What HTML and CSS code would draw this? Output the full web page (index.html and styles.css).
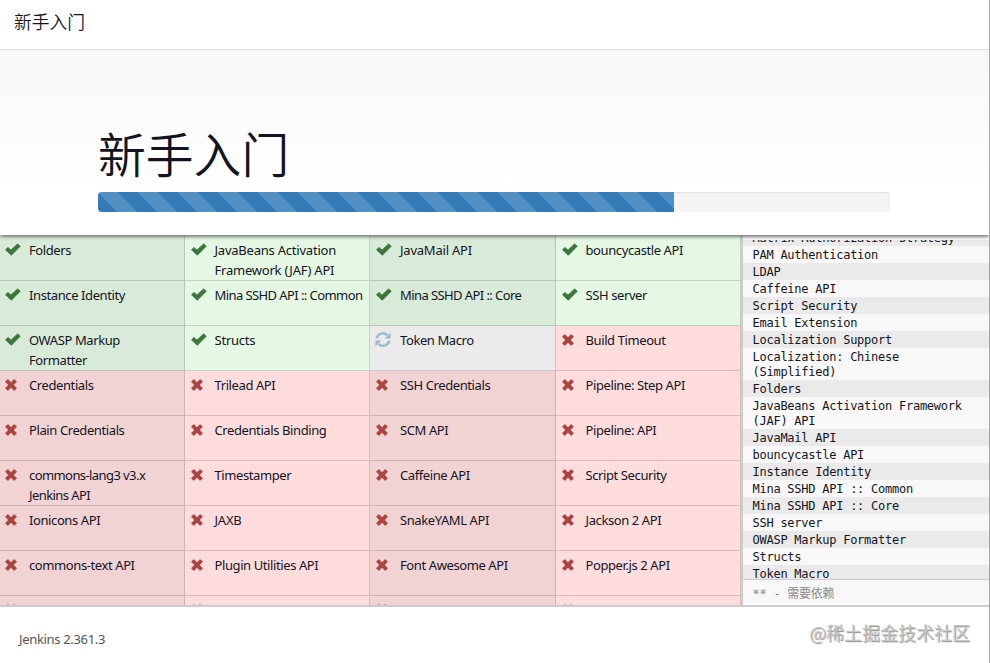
FILE: index.html
```html
<!DOCTYPE html>
<html lang="zh-CN">
<head>
    <meta charset="UTF-8">
    <title>新手入门 [Jenkins]</title>
    <link rel="stylesheet" href="styles.css">
</head>
<body>
    <svg class="sprite">
        <symbol id="ok" viewBox="0 0 16 13"><path d="M.6 6.8 3 4.5 6 7.2 12.5 1 15.2 3.2 6.3 12.2Z" stroke-width="1" stroke-linejoin="round"/></symbol>
        <symbol id="remove" viewBox="0 0 12 12"><path d="M2.8.6 6 3.7 9.2.6 11.4 2.8 8.3 6 11.4 9.2 9.2 11.4 6 8.3 2.8 11.4.6 9.2 3.7 6 .6 2.8Z" stroke-width="1" stroke-linejoin="round"/></symbol>
        <symbol id="refresh" viewBox="0 0 16 15"><path d="M1.7 6.2A6.3 6 0 0 1 12.4 3.2M14.3 8.8A6.3 6 0 0 1 3.6 11.8" fill="none" stroke-width="2.5"/><path d="M15.6.6V6.4H9.6ZM.4 14.4V8.6H6.4Z" stroke="none"/></symbol>
    </svg>

    <div class="page">
        <h4 class="title">新手入门</h4>

        <div class="jumbotron">
            <h1>新手入门</h1>
            <div class="progress">
                <div class="bar" style="width: 72.73%"></div>
            </div>
        </div>

        <div class="main">
            <div class="plugins">
                <div class="plugin success"><svg><use href="#ok"/></svg>Folders</div>
                <div class="plugin success loose"><svg><use href="#ok"/></svg>JavaBeans Activation<br>Framework (JAF) API</div>
                <div class="plugin success loose"><svg><use href="#ok"/></svg>JavaMail API</div>
                <div class="plugin success"><svg><use href="#ok"/></svg>bouncycastle API</div>
                <div class="plugin success"><svg><use href="#ok"/></svg>Instance Identity</div>
                <div class="plugin success tight"><svg><use href="#ok"/></svg>Mina SSHD API :: Common</div>
                <div class="plugin success tight"><svg><use href="#ok"/></svg>Mina SSHD API :: Core</div>
                <div class="plugin success"><svg><use href="#ok"/></svg>SSH server</div>
                <div class="plugin success"><svg><use href="#ok"/></svg>OWASP Markup<br>Formatter</div>
                <div class="plugin success loose"><svg><use href="#ok"/></svg>Structs</div>
                <div class="plugin installing"><svg><use href="#refresh"/></svg>Token Macro</div>
                <div class="plugin"><svg><use href="#remove"/></svg>Build Timeout</div>
                <div class="plugin"><svg><use href="#remove"/></svg>Credentials</div>
                <div class="plugin"><svg><use href="#remove"/></svg>Trilead API</div>
                <div class="plugin"><svg><use href="#remove"/></svg>SSH Credentials</div>
                <div class="plugin"><svg><use href="#remove"/></svg>Pipeline: Step API</div>
                <div class="plugin"><svg><use href="#remove"/></svg>Plain Credentials</div>
                <div class="plugin"><svg><use href="#remove"/></svg>Credentials Binding</div>
                <div class="plugin"><svg><use href="#remove"/></svg>SCM API</div>
                <div class="plugin"><svg><use href="#remove"/></svg>Pipeline: API</div>
                <div class="plugin tight"><svg><use href="#remove"/></svg>commons-lang3 v3.x<br>Jenkins API</div>
                <div class="plugin"><svg><use href="#remove"/></svg>Timestamper</div>
                <div class="plugin"><svg><use href="#remove"/></svg>Caffeine API</div>
                <div class="plugin"><svg><use href="#remove"/></svg>Script Security</div>
                <div class="plugin"><svg><use href="#remove"/></svg>Ionicons API</div>
                <div class="plugin loose"><svg><use href="#remove"/></svg>JAXB</div>
                <div class="plugin"><svg><use href="#remove"/></svg>SnakeYAML API</div>
                <div class="plugin"><svg><use href="#remove"/></svg>Jackson 2 API</div>
                <div class="plugin"><svg><use href="#remove"/></svg>commons-text API</div>
                <div class="plugin"><svg><use href="#remove"/></svg>Plugin Utilities API</div>
                <div class="plugin"><svg><use href="#remove"/></svg>Font Awesome API</div>
                <div class="plugin"><svg><use href="#remove"/></svg>Popper.js 2 API</div>
                <div class="plugin"><svg><use href="#remove"/></svg></div>
                <div class="plugin"><svg><use href="#remove"/></svg></div>
                <div class="plugin"><svg><use href="#remove"/></svg></div>
                <div class="plugin"><svg><use href="#remove"/></svg></div>
            </div>

            <div class="console">
                <div class="log">
                    <div>Matrix Authorization Strategy</div>
                    <div>PAM Authentication</div>
                    <div>LDAP</div>
                    <div>Caffeine API</div>
                    <div>Script Security</div>
                    <div>Email Extension</div>
                    <div>Localization Support</div>
                    <div>Localization: Chinese<br>(Simplified)</div>
                    <div>Folders</div>
                    <div>JavaBeans Activation Framework<br>(JAF) API</div>
                    <div>JavaMail API</div>
                    <div>bouncycastle API</div>
                    <div>Instance Identity</div>
                    <div>Mina SSHD API :: Common</div>
                    <div>Mina SSHD API :: Core</div>
                    <div>SSH server</div>
                    <div>OWASP Markup Formatter</div>
                    <div>Structs</div>
                    <div>Token Macro</div>
                </div>
                <div class="note">** - 需要依赖</div>
            </div>
        </div>

        <div class="footer">
            <span class="version">Jenkins 2.361.3</span>
            <span class="watermark">@稀土掘金技术社区</span>
        </div>
    </div>
</body>
</html>
```
FILE: styles.css
```css
* { box-sizing: border-box; }
body { margin: 0; font-family: "Noto Sans", "Noto Sans CJK SC", sans-serif; font-size: 13px; color: #14141f; background: #fff; }
.sprite { display: none; }
.page { display: flex; flex-direction: column; height: 663px; overflow: hidden; border-right: 1px solid #aaa; }

.title { position: relative; z-index: 1; height: 50px; margin: 0; padding: 8px 14px; background: #fff; border-bottom: 1px solid #ddd; font: 350 17.8px/26px "Noto Sans CJK SC", sans-serif; }

.jumbotron { position: relative; height: 185px; padding: 77px 99px 0 98px; background: linear-gradient(#f8f8f8, #fff 75%); box-shadow: 0 1px 4px rgba(0,0,0,0.75); }
.jumbotron h1 { height: 52px; margin: 0 0 13px; font: 350 47.8px/52px "Noto Sans CJK SC", sans-serif; }
.progress { height: 20px; overflow: hidden; background: #f5f5f5; border-radius: 4px; box-shadow: inset 0 1px 2px rgba(0,0,0,0.1); }
.bar { height: 100%; background: #337ab7 linear-gradient(45deg, rgba(255,255,255,0.15) 25%, transparent 25%, transparent 50%, rgba(255,255,255,0.15) 50%, rgba(255,255,255,0.15) 75%, transparent 75%, transparent) 0 0 / 40px 40px; }

.main { display: flex; height: 372px; padding-top: 1px; border-bottom: 2px solid #ccc; }
.plugins { display: grid; grid-template-columns: 185px 185px 186px 185px; grid-auto-rows: 45px; width: 741px; overflow: hidden; }
.plugin { display: flex; padding: 4px 0 0 5px; line-height: 20px; white-space: nowrap; letter-spacing: -0.4px; background: #ffdddd; border-right: 1px solid rgba(0,0,0,0.15); border-bottom: 1px solid rgba(0,0,0,0.15); }
.plugin.tight { letter-spacing: -0.58px; }
.plugin.loose { letter-spacing: -0.22px; }
.plugin:nth-child(odd) { background: #f1d3d3; }
.plugin:nth-child(even) { padding-left: 5.5px; }
.plugin:nth-child(4n+3) { padding-left: 6px; }
.plugin.success { background: #e4f8e4; }
.plugin.success:nth-child(odd) { background: #d8ebd9; }
.plugin.installing:nth-child(odd) { background: #ebebeb; }
.plugin svg { flex: none; width: 12px; height: 12px; margin: 4px 12px 0 0; fill: #a94442; stroke: #a94442; }
.plugin.success svg { width: 16px; height: 13px; margin: 3px 8px 0 0; fill: #3c763d; stroke: #3c763d; }
.plugin.installing svg { width: 16px; height: 15px; margin: 2px 9.5px 0 -1.5px; fill: #a3b8c7; stroke: #a3b8c7; }

.console { display: flex; flex-direction: column; flex: 1; padding-top: 4px; border-left: 2px solid #ccc; background: #f8f8f8; font: 12px/15px "DejaVu Sans Mono", "Noto Sans CJK SC", monospace; letter-spacing: -0.25px; }
.log { flex: none; height: 339px; overflow: hidden; }
.log div { padding: 2px 9.5px 0; white-space: nowrap; }
.log div:first-child { margin-top: -11px; }
.log div:nth-child(odd) { background: #eaeaea; }
.note { flex: 1; padding: 7px 9.5px 0; border-top: 1px solid #ccc; color: #888; }

.footer { display: flex; justify-content: space-between; flex: 1; padding: 12px 19px 0 19px; }
.version { padding-top: 10px; line-height: 20px; color: #555; letter-spacing: -0.33px; }
.watermark { font: 350 18px/26px "Noto Sans CJK SC", sans-serif; color: #c8c8c8; text-shadow: 1px 1px 1px #888; }
```
